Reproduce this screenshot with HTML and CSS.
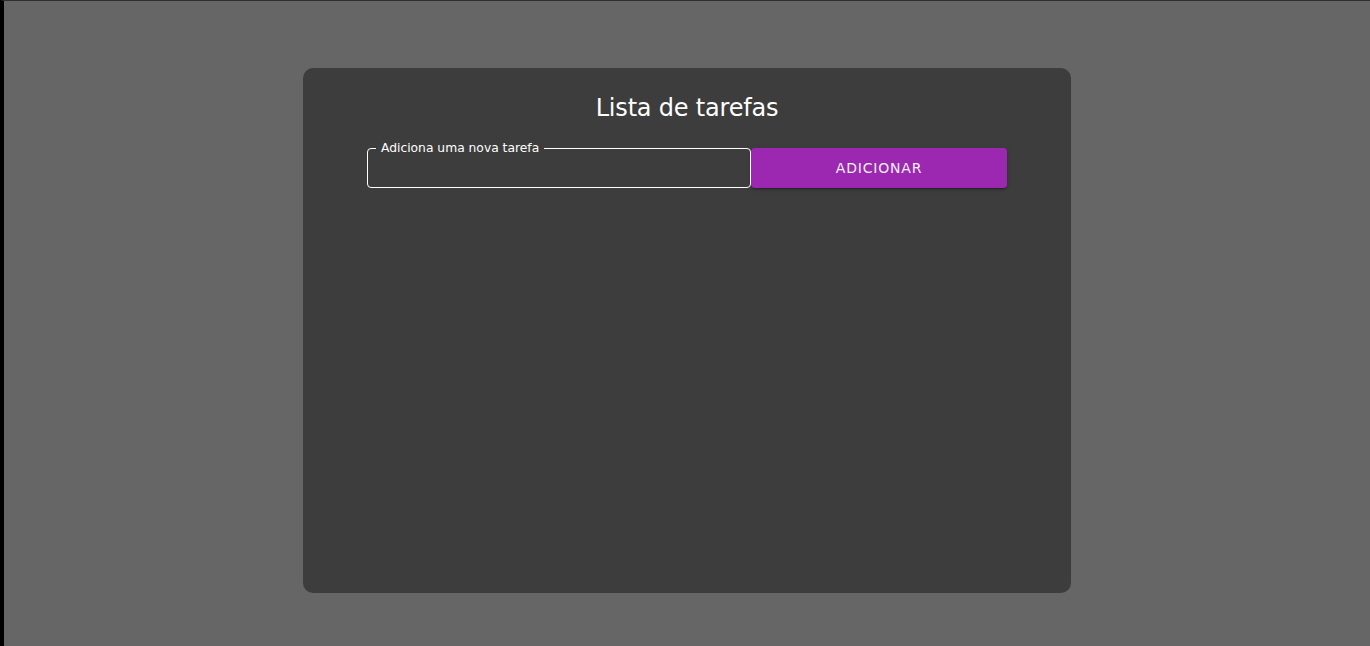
FILE: index.html
```html
<!DOCTYPE html>
<html lang="pt">
<head>
<meta charset="utf-8">
<title>Lista de tarefas</title>
<link rel="stylesheet" href="styles.css">
</head>
<body>
<main class="page">
  <section class="card">
    <h1 class="title">Lista de tarefas</h1>
    <form class="form">
      <div class="field">
        <label class="label" for="task">Adiciona uma nova tarefa</label>
        <input class="input" id="task" type="text">
      </div>
      <button class="button" type="button">ADICIONAR</button>
    </form>
  </section>
</main>
</body>
</html>
```
FILE: styles.css
```css
html, body {
  margin: 0;
  padding: 0;
  height: 100%;
}
body {
  background: #666666;
  font-family: "DejaVu Sans", "Liberation Sans", sans-serif;
  color: #ffffff;
  box-sizing: border-box;
  border-top: 1px solid #2e2e2e;
  border-left: 4px solid #000000;
}
.page {
  display: flex;
  justify-content: center;
  padding-top: 67px;
}
.card {
  width: 768px;
  height: 525px;
  box-sizing: border-box;
  background: #3d3d3d;
  border-radius: 10px;
  padding: 26px 64px 0;
  display: flex;
  flex-direction: column;
  align-items: stretch;
}
.title {
  margin: 0;
  font-size: 24px;
  line-height: 28px;
  font-weight: 400;
  text-align: center;
  letter-spacing: -0.2px;
}
.form {
  display: flex;
  margin-top: 26px;
  height: 40px;
}
.field {
  position: relative;
  width: 384px;
  height: 40px;
  box-sizing: border-box;
  border: 1px solid #ffffff;
  border-radius: 4px;
}
.label {
  position: absolute;
  left: 8px;
  top: -7px;
  padding: 0 5px;
  background: #3d3d3d;
  font-size: 12.3px;
  line-height: 12px;
  color: #ffffff;
}
.input {
  width: 100%;
  height: 100%;
  box-sizing: border-box;
  border: 0;
  background: transparent;
  outline: none;
  color: #ffffff;
  font: inherit;
  padding: 0 14px;
}
.button {
  width: 256px;
  height: 40px;
  border: 0;
  border-radius: 4px;
  background: #9c27b0;
  color: #f0f0f0;
  font-family: "DejaVu Sans", "Liberation Sans", sans-serif;
  font-size: 14px;
  letter-spacing: 0.8px;
  font-weight: 400;
  box-shadow: 0 3px 1px -2px rgba(0,0,0,0.2), 0 2px 2px 0 rgba(0,0,0,0.14), 0 1px 5px 0 rgba(0,0,0,0.12);
  cursor: pointer;
}
```
